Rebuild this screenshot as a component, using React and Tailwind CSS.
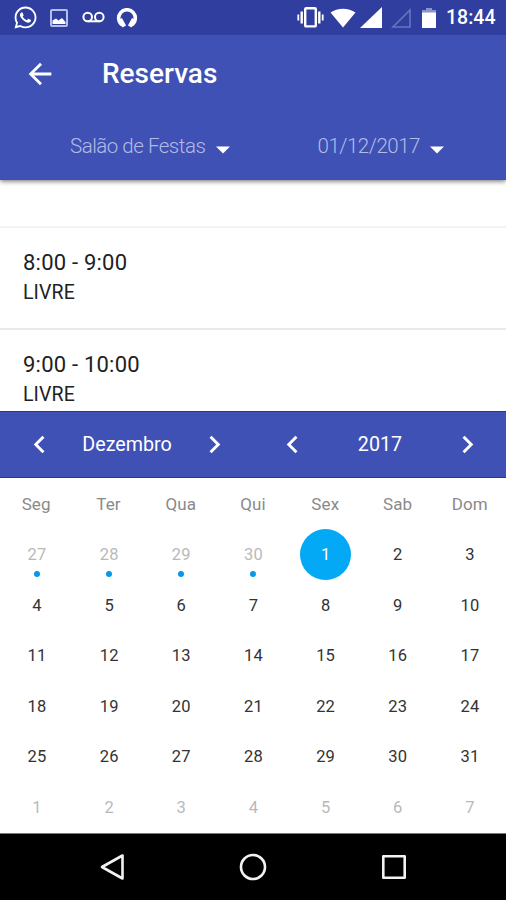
import React from 'react';
import { FaWhatsapp } from 'react-icons/fa6';
import { MdArrowBack, MdChevronLeft, MdChevronRight } from 'react-icons/md';

const slots = [
  { time: '8:00 - 9:00', status: 'LIVRE' },
  { time: '9:00 - 10:00', status: 'LIVRE' },
];

const weekdays = ['Seg', 'Ter', 'Qua', 'Qui', 'Sex', 'Sab', 'Dom'];

const days = [
  ...[27, 28, 29, 30].map((n) => ({ n, muted: true, dot: true })),
  ...Array.from({ length: 31 }, (_, i) => ({ n: i + 1, selected: i === 0 })),
  ...[1, 2, 3, 4, 5, 6, 7].map((n) => ({ n, muted: true })),
];

const StatusBar = () => (
  <div className="h-[35px] bg-[#303f9f] flex items-center pl-[13px] pr-[9px] text-white shrink-0 relative z-10">
    <FaWhatsapp className="w-[25px] h-[25px] -mt-px" />
    <svg className="w-[18px] h-[18px] ml-3 mt-px" viewBox="0 0 18 18">
      <rect x="1" y="1" width="16" height="16" rx="1" fill="none" stroke="#b4bee8" strokeWidth="2" />
      <path d="M2.5 15V11.5L6 9.5L8.5 11.5L12 9L15.5 13V15Z" fill="#fff" />
    </svg>
    <svg className="w-[23px] h-3 ml-[14px] -mt-[2px]" viewBox="0 0 23 12" fill="none" stroke="#fff" strokeWidth="2">
      <circle cx="5.7" cy="6" r="4.3" />
      <circle cx="17.3" cy="6" r="4.3" />
      <path d="M5.7 10.3H17.3" />
    </svg>
    <svg className="w-[22px] h-[21px] ml-[11px] mt-px" viewBox="0 0 22 21" fill="none" stroke="#fff">
      <path d="M6.5 17A8.3 8.3 0 1 1 15.5 17" strokeWidth="3.6" />
      <path d="M4.2 11L8.3 18.5M17.8 11L13.7 18.5" strokeWidth="4" />
    </svg>

    <svg className="w-[27px] h-[21px] ml-auto" viewBox="0 0 27 21" fill="none" stroke="#fff">
      <rect x="8.2" y="1.2" width="10.6" height="18.2" rx="1" strokeWidth="2.4" />
      <path d="M4.7 4.5V16.5M22.3 4.5V16.5" strokeWidth="2.4" />
      <path d="M1.3 7.5V13.5M25.7 7.5V13.5" strokeWidth="1.8" />
    </svg>
    <svg className="w-[26px] h-5 ml-[6px]" viewBox="0 0 26 20" fill="#fff">
      <path d="M.5 4.5C7.5-.6 18.5-.6 25.5 4.5L13 19.5Z" />
    </svg>
    <svg className="w-[22px] h-[21px] ml-1" viewBox="0 0 22 21" fill="#fff">
      <path d="M22 0V21H0Z" />
    </svg>
    <svg className="w-5 h-5 ml-[9px]" viewBox="0 0 20 20" fill="none" stroke="#6874be" strokeWidth="1.6">
      <path d="M19 2V19H2Z" />
    </svg>
    <svg className="w-[14px] h-5 ml-[11px]" viewBox="0 0 14 20">
      <path d="M4 0H10V2H14V5H0V2H4Z" fill="#8993cf" />
      <path d="M0 4.5H14V20H0Z" fill="#fff" />
    </svg>
    <span className="text-[19.5px] leading-none font-medium ml-[10px] mt-px w-[51px] whitespace-nowrap">18:44</span>
  </div>
);

const Caret = () => (
  <svg className="w-[14px] h-2 mt-[7px]" viewBox="0 0 14 8" fill="#fff">
    <path d="M0 .5H14L7 7.5Z" />
  </svg>
);

const Header = () => (
  <header className="h-[145px] bg-[#3f51b5] text-white shrink-0 relative shadow-[0_1px_5px_rgba(0,0,0,0.6)]">
    <div className="h-[77px] flex items-center pl-[23px]">
      <MdArrowBack className="w-[34px] h-[34px]" />
      <h1 className="text-[28px] leading-none font-medium ml-[45px]">Reservas</h1>
    </div>
    <div className="h-[68px] flex items-start pt-[22px] pl-[70px] text-[20.5px] leading-[24px] tracking-[-0.48px] font-light text-[#b3bce6]">
      <button className="flex items-center w-[247.5px]">
        <span className="w-[146px] text-left">Salão de Festas</span>
        <Caret />
      </button>
      <button className="flex items-center">
        <span className="w-[112px] text-left">01/12/2017</span>
        <Caret />
      </button>
    </div>
  </header>
);

const Slots = () => (
  <div className="h-[231px] bg-white overflow-hidden pt-[46px] shrink-0">
    {slots.map((s) => (
      <div key={s.time} className="h-[102px] border-t-2 border-[#e9e9e9] first:border-[#f3f3f3] px-[23px] pt-[21px] text-[#212121]">
        <p className="text-[22px] leading-[27px] tracking-[0.22px]">{s.time}</p>
        <p className="text-[19.5px] leading-[24px] mt-[5px] tracking-[0.1px]">{s.status}</p>
      </div>
    ))}
  </div>
);

const Switcher = ({ label }) => (
  <div className="flex-1 flex items-center justify-between pl-[22px] pr-[21px]">
    <MdChevronLeft className="w-[35px] h-[35px]" />
    <span className="text-[19.7px] leading-none">{label}</span>
    <MdChevronRight className="w-[35px] h-[35px]" />
  </div>
);

const Day = ({ n, muted, dot, selected }) => (
  <div className="h-[50.6px] flex items-center justify-center">
    <div
      className={`w-[51px] h-[51px] pt-[2px] rounded-full flex items-center justify-center relative ${
        selected ? 'bg-[#03a9f4] text-white' : muted ? 'text-[#b9b9b9]' : 'text-[#333]'
      }`}
    >
      {n}
      {dot && <span className="absolute bottom-[3px] w-[6px] h-[6px] rounded-full bg-[#039be5]" />}
    </div>
  </div>
);

const Calendar = () => (
  <div className="h-[422px] bg-white shrink-0">
    <div className="h-[67px] bg-[#3f51b5] border-y border-[#2536a0] flex text-white">
      <Switcher label="Dezembro" />
      <Switcher label="2017" />
    </div>
    <div className="grid grid-cols-7 h-[51px] pt-[2px] items-center text-center text-[17px] tracking-[0.1px] text-[#8a8a8a]">
      {weekdays.map((d) => (
        <span key={d}>{d}</span>
      ))}
    </div>
    <div className="grid grid-cols-7 pl-px text-[16.5px] tracking-[0.2px]">
      {days.map((d, i) => (
        <Day key={i} {...d} />
      ))}
    </div>
  </div>
);

const NavBar = () => (
  <nav className="h-[67px] bg-black flex items-center justify-center gap-[114px] border-t border-[#777] shrink-0">
    <svg className="w-[26px] h-7" viewBox="0 0 26 28" fill="none" stroke="#f2f2f2" strokeWidth="2.6" strokeLinejoin="round">
      <path d="M23.5 2.5V25.5L3 14Z" />
    </svg>
    <svg className="w-7 h-7" viewBox="0 0 28 28" fill="none" stroke="#f2f2f2" strokeWidth="2.6">
      <circle cx="14" cy="14" r="12" />
    </svg>
    <svg className="w-[26px] h-[26px]" viewBox="0 0 26 26" fill="none" stroke="#f2f2f2" strokeWidth="2.6" strokeLinejoin="round">
      <rect x="2.3" y="2.3" width="21.4" height="21.4" />
    </svg>
  </nav>
);

export default function App() {
  return (
    <div className="w-[506px] h-[900px] flex flex-col overflow-hidden bg-white font-['Roboto',sans-serif]">
      <StatusBar />
      <Header />
      <Slots />
      <Calendar />
      <NavBar />
    </div>
  );
}
